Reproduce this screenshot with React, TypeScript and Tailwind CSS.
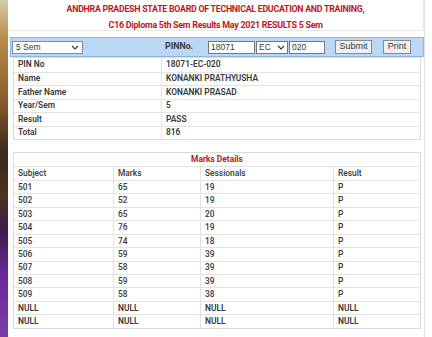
import React from "react";

const Chevron = () => (
  <svg width="8" height="5" viewBox="0 0 8 5" className="shrink-0">
    <path d="M1 1 L4 4 L7 1" fill="none" stroke="#333" strokeWidth="1.1" />
  </svg>
);

const info: [string, string][] = [
  ["PIN No", "18071-EC-020"],
  ["Name", "KONANKI PRATHYUSHA"],
  ["Father Name", "KONANKI PRASAD"],
  ["Year/Sem", "5"],
  ["Result", "PASS"],
  ["Total", "816"],
];

const marks: [string, string, string, string][] = [
  ["501", "65", "19", "P"],
  ["502", "52", "19", "P"],
  ["503", "65", "20", "P"],
  ["504", "76", "19", "P"],
  ["505", "74", "18", "P"],
  ["506", "59", "39", "P"],
  ["507", "58", "39", "P"],
  ["508", "59", "39", "P"],
  ["509", "58", "38", "P"],
];

export default function App() {
  return (
    <div
      className="w-[432px] h-[337px] flex overflow-hidden bg-white text-[#383838]"
      style={{ fontFamily: "Roboto, 'Noto Sans', sans-serif" }}
    >
      <div className="w-[8px] h-full shrink-0 bg-[linear-gradient(180deg,#d8c9a8_0%,#b88a48_12%,#8a5a2a_30%,#3b2a1c_45%,#4a3320_58%,#3a1e4a_68%,#6a2c9a_82%,#7b3aa8_100%)]" />
      <div className="w-[417px] shrink-0 flex flex-col border-r border-[#e2e2e2]">
        {/* header */}
        <div className="h-[31px] flex flex-col items-center border-b border-r border-[#e8e8e8] rounded-br-[3px] text-[#c0161d] font-bold text-[9.8px] tracking-[-0.3px] leading-none">
          <div className="mt-[4px] scale-x-[0.9]">ANDHRA PRADESH STATE BOARD OF TECHNICAL EDUCATION AND TRAINING,</div>
          <div className="mt-[6px] scale-x-[0.91]">C16 Diploma 5th Sem Results May 2021 RESULTS 5 Sem</div>
        </div>
        {/* search bar */}
        <div
          className="mt-[6px] ml-[2px] h-[20px] flex items-center bg-[#bcd7f5] border border-[#8eb4e0] text-[8.5px]"
          style={{ fontFamily: "'Liberation Sans', Arial, sans-serif" }}
        >
          <div className="ml-[1px] w-[71px] h-[13px] bg-white border border-[#6f8fb5] flex items-center justify-between px-[3px]">
            <span>5 Sem</span>
            <Chevron />
          </div>
          <div
            className="ml-[82px] font-bold text-[8.8px] w-[33px]"
            style={{ fontFamily: "Roboto, sans-serif" }}
          >
            PINNo.
          </div>
          <div className="ml-[10px] w-[47px] h-[13px] bg-white border border-[#777] flex items-center px-[2px]">
            18071
          </div>
          <div className="ml-[1px] w-[32px] h-[13px] bg-white border border-[#777] flex items-center justify-between px-[2px]">
            <span>EC</span>
            <Chevron />
          </div>
          <div className="ml-[1px] w-[36px] h-[13px] bg-white border border-[#777] flex items-center px-[2px]">
            020
          </div>
          <div className="ml-[10px] w-[37px] h-[14px] bg-[#efefef] border border-[#8a8a8a] flex items-center justify-center text-[9px]">
            Submit
          </div>
          <div className="ml-[11px] w-[28px] h-[14px] bg-[#efefef] border border-[#8a8a8a] flex items-center justify-center text-[9px]">
            Print
          </div>
        </div>
        {/* info table */}
        <div className="ml-[5px] w-[408px] border border-[#dcdcdc] text-[8.4px] font-semibold">
          {info.map(([k, v], i) => (
            <div
              key={k}
              className={`h-[13.5px] flex items-center ${i > 0 ? "border-t border-[#e2e2e2]" : ""}`}
            >
              <div className="w-[148px] h-full flex items-center pl-[4px] border-r border-[#e2e2e2]">{k}</div>
              <div className="flex-1 pl-[4px]">{v}</div>
            </div>
          ))}
        </div>
        {/* marks table */}
        <div className="mt-[12px] ml-[5px] w-[408px] border border-[#dcdcdc] text-[8.4px]">
          <div className="h-[13.45px] flex items-center justify-center text-[#c0161d] font-bold">
            Marks Details
          </div>
          <div className="h-[13.45px] flex items-center border-t border-[#e2e2e2] font-medium">
            <div className="w-[100px] h-full flex items-center pl-[4px] border-r border-[#e2e2e2]">Subject</div>
            <div className="w-[87px] h-full flex items-center pl-[4px] border-r border-[#e2e2e2]">Marks</div>
            <div className="w-[133px] h-full flex items-center pl-[4px] border-r border-[#e2e2e2]">Sessionals</div>
            <div className="flex-1 pl-[4px]">Result</div>
          </div>
          {marks.map((r) => (
            <div key={r[0]} className="h-[13.45px] flex items-center border-t border-[#e2e2e2] font-medium">
              <div className="w-[100px] h-full flex items-center pl-[4px] border-r border-[#e2e2e2]">{r[0]}</div>
              <div className="w-[87px] h-full flex items-center pl-[4px] border-r border-[#e2e2e2]">{r[1]}</div>
              <div className="w-[133px] h-full flex items-center pl-[4px] border-r border-[#e2e2e2]">{r[2]}</div>
              <div className="flex-1 pl-[4px]">{r[3]}</div>
            </div>
          ))}
          {[0, 1].map((i) => (
            <div key={i} className="h-[13.45px] flex items-center border-t border-[#e2e2e2] font-semibold">
              <div className="w-[100px] h-full flex items-center pl-[4px] border-r border-[#e2e2e2]">NULL</div>
              <div className="w-[87px] h-full flex items-center pl-[4px] border-r border-[#e2e2e2]">NULL</div>
              <div className="w-[133px] h-full flex items-center pl-[4px] border-r border-[#e2e2e2]">NULL</div>
              <div className="flex-1 pl-[4px]">NULL</div>
            </div>
          ))}
        </div>
      </div>
    </div>
  );
}
